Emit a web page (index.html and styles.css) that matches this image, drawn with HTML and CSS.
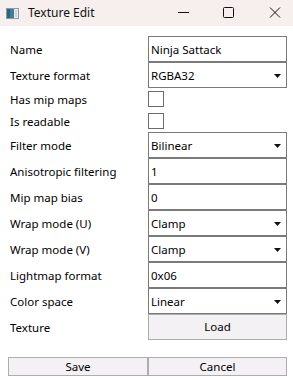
FILE: index.html
```html
<!DOCTYPE html>
<html>
<head>
<meta charset="utf-8">
<link rel="stylesheet" href="styles.css">
</head>
<body>
<div class="window">
  <div class="titlebar">
    <svg class="appicon" width="13" height="11" viewBox="0 0 13 11">
      <rect x="0.5" y="0.5" width="12" height="10" fill="#e8eef2" stroke="#8a9aa6"/>
      <rect x="1" y="1" width="7" height="9" fill="#3f7f95"/>
      <rect x="1" y="1" width="3" height="9" fill="#2d6376"/>
      <rect x="9" y="2" width="2" height="7" fill="#c9d6de"/>
    </svg>
    <span class="title">Texture Edit</span>
    <div class="controls">
      <svg class="ctl" width="46" height="26" viewBox="0 0 46 26"><line x1="23" y1="12.5" x2="34" y2="12.5" stroke="#111" stroke-width="1"/></svg>
      <svg class="ctl" width="46" height="26" viewBox="0 0 46 26"><rect x="22.5" y="7.5" width="10" height="10" rx="1" fill="none" stroke="#111" stroke-width="1"/></svg>
      <svg class="ctl" width="46" height="26" viewBox="0 0 46 26"><path d="M23 7.5 L33 17.5 M33 7.5 L23 17.5" stroke="#111" stroke-width="1" fill="none"/></svg>
    </div>
  </div>
  <div class="form">
    <div class="label">Name</div>
    <div class="box">Ninja Sattack</div>

    <div class="label">Texture format</div>
    <div class="box combo"><span>RGBA32</span><svg class="arrow" width="7" height="4" viewBox="0 0 7 4"><path d="M0 0 H7 L3.5 4 Z" fill="#111"/></svg></div>

    <div class="label short">Has mip maps</div>
    <div class="checkrow"><div class="check"></div></div>

    <div class="label short">Is readable</div>
    <div class="checkrow"><div class="check"></div></div>

    <div class="label">Filter mode</div>
    <div class="box combo"><span>Bilinear</span><svg class="arrow" width="7" height="4" viewBox="0 0 7 4"><path d="M0 0 H7 L3.5 4 Z" fill="#111"/></svg></div>

    <div class="label">Anisotropic filtering</div>
    <div class="box">1</div>

    <div class="label">Mip map bias</div>
    <div class="box">0</div>

    <div class="label">Wrap mode (U)</div>
    <div class="box combo"><span>Clamp</span><svg class="arrow" width="7" height="4" viewBox="0 0 7 4"><path d="M0 0 H7 L3.5 4 Z" fill="#111"/></svg></div>

    <div class="label">Wrap mode (V)</div>
    <div class="box combo"><span>Clamp</span><svg class="arrow" width="7" height="4" viewBox="0 0 7 4"><path d="M0 0 H7 L3.5 4 Z" fill="#111"/></svg></div>

    <div class="label">Lightmap format</div>
    <div class="box">0x06</div>

    <div class="label">Color space</div>
    <div class="box combo"><span>Linear</span><svg class="arrow" width="7" height="4" viewBox="0 0 7 4"><path d="M0 0 H7 L3.5 4 Z" fill="#111"/></svg></div>

    <div class="label">Texture</div>
    <div class="btn load">Load</div>
  </div>
  <div class="actions">
    <div class="btn">Save</div>
    <div class="btn">Cancel</div>
  </div>
</div>
</body>
</html>
```

FILE: styles.css
```css
html, body {
  margin: 0;
  padding: 0;
  background: #ffffff;
}
body {
  font-family: "Noto Sans", "Open Sans", sans-serif;
  font-size: 11.5px;
  color: #000;
  width: 293px;
  height: 380px;
  overflow: hidden;
}
.titlebar {
  height: 26px;
  background: #f6efee;
  display: flex;
  align-items: center;
}
.appicon {
  margin-left: 6px;
  margin-right: 9px;
  flex: none;
}
.title {
  font-size: 12px;
  color: #111;
  flex: 1;
  line-height: 26px;
}
.controls {
  display: flex;
}
.ctl {
  display: block;
}
.form {
  display: grid;
  grid-template-columns: 140px 139px;
  margin: 10px 0 0 8px;
}
.label {
  height: 26px;
  line-height: 26px;
  padding: 1px 0 0 2px;
  box-sizing: border-box;
  white-space: nowrap;
}
.label.short {
  height: 22px;
  line-height: 22px;
}
.box {
  height: 26px;
  box-sizing: border-box;
  border: 1px solid #7a7a7a;
  background: #fff;
  padding: 1px 3px 0 2px;
  line-height: 23px;
  white-space: nowrap;
}
.combo {
  display: flex;
  align-items: center;
  justify-content: space-between;
  padding-right: 5px;
}
.arrow {
  display: block;
  flex: none;
}
.checkrow {
  height: 22px;
  box-sizing: border-box;
  padding-top: 3px;
}
.check {
  width: 16px;
  height: 16px;
  box-sizing: border-box;
  border: 1px solid #6b6b6b;
  background: #fff;
}
.btn {
  box-sizing: border-box;
  border: 1px solid #adadad;
  background: #f3f1f4;
  text-align: center;
  white-space: nowrap;
}
.load {
  height: 26px;
  line-height: 24px;
}
.actions {
  display: grid;
  grid-template-columns: 140px 139px;
  margin: 17px 0 0 8px;
}
.actions .btn {
  height: 19px;
  line-height: 17px;
}
```
